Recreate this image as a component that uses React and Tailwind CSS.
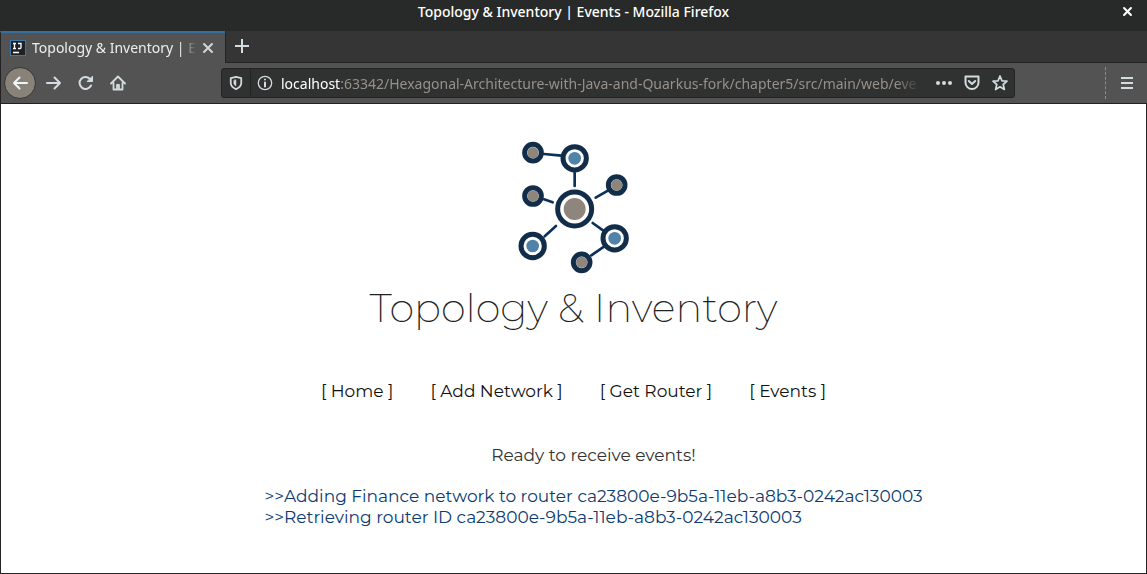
import React from "react";

const stroke = { fill: "none", stroke: "currentColor", strokeWidth: 2, strokeLinecap: "round", strokeLinejoin: "round" };

function Icon({ children, className = "size-4" }) {
  return (
    <svg viewBox="0 0 16 16" className={className} aria-hidden="true" {...stroke}>
      {children}
    </svg>
  );
}

function TitleBar() {
  return (
    <header className="grid h-[31px] grid-cols-[1fr_auto_1fr] items-start bg-[#272a29] pt-px text-white">
      <span />
      <h1 className="text-sm leading-[22px] font-medium">Topology &amp; Inventory | Events - Mozilla Firefox</h1>
      <button type="button" aria-label="Close window" className="mt-[3px] mr-3 justify-self-end p-0.5">
        <Icon className="size-[11px]">
          <path d="M3 3l10 10M13 3L3 13" strokeWidth="3" />
        </Icon>
      </button>
    </header>
  );
}

function TabStrip() {
  return (
    <div className="flex h-8 bg-[#353535]">
      <div className="flex w-[225px] items-center border-t-2 border-l border-t-[#376f9f] border-l-[#242424] bg-[#535353] pr-2 pl-[9px] text-[#eeeeec]">
        <svg viewBox="0 0 16 16" className="size-4 shrink-0" aria-hidden="true">
          <rect x="0.5" y="0.5" width="15" height="15" fill="#1c2225" stroke="#3c79aa" />
          <path d="M3 3.5h3M4.5 3.5v5M3 8.5h3M8 3.5h3v4q0 1-1 1h-2M3 12.5h6" fill="none" stroke="#fff" strokeWidth="1.3" />
        </svg>
        <span className="ml-1.5 w-[164px] overflow-hidden [mask-image:linear-gradient(to_right,black_90%,transparent_100%)] text-sm leading-5 whitespace-nowrap">
          Topology &amp; Inventory | Events
        </span>
        <button type="button" aria-label="Close tab" className="ml-1 text-[#d3d7d8]">
          <Icon>
            <path d="M4 4l8 8M12 4l-8 8" />
          </Icon>
        </button>
      </div>
      <div className="flex flex-1 items-center border-b border-l border-[#242424] pl-2 text-[#d3dcdf]">
        <button type="button" aria-label="New tab" className="-mt-0.5">
          <Icon>
            <path d="M8 1v14M1 8h14" strokeLinecap="butt" />
          </Icon>
        </button>
      </div>
    </div>
  );
}

function NavBar() {
  return (
    <div className="flex h-[41px] items-center border-b border-l border-[#242021] bg-[#535353] pr-2 pl-[3px] text-[#d3dcdf]">
      <div className="flex w-[217px] items-center gap-4">
        <button type="button" aria-label="Back" className="-mr-1.5 flex size-8 items-center justify-center rounded-full border border-[#353535] bg-[#898279] text-[#eef6fa]">
          <Icon>
            <path d="M15 8H2M7.500 2.500L2 8l5.500 5.500" />
          </Icon>
        </button>
        <button type="button" aria-label="Forward">
          <Icon>
            <path d="M1 8h13M8.500 2.500L14 8l-5.500 5.500" />
          </Icon>
        </button>
        <button type="button" aria-label="Reload">
          <Icon>
            <path d="M13 10.500A6 6 0 1 1 12.500 4.500" />
            <path d="M14.500 1.500v5h-5z" fill="currentColor" strokeWidth="1" />
          </Icon>
        </button>
        <button type="button" aria-label="Home">
          <Icon>
            <path d="M1 8.500L8 1.500l7 7M3.500 8v6.500h9V8M7 14v-4h2v4" strokeWidth="1.8" />
          </Icon>
        </button>
      </div>
      <div className="flex h-[30px] w-[794px] items-center rounded-[3px] border border-[#242424] bg-[#303131] pr-1.5">
        <button type="button" aria-label="Tracking protection" className="flex h-full w-[29px] items-center justify-center border-r border-[#242424]">
          <Icon className="size-[14px]">
            <path d="M8 1L14 2.500V8c0 3-2.500 5.500-6 7-3.500-1.500-6-4-6-7V2.500z" />
            <path d="M8 4.500v7Q6 10.500 5.500 8.500V5z" fill="currentColor" strokeWidth="0.5" />
          </Icon>
        </button>
        <button type="button" aria-label="Site information" className="ml-1.5">
          <Icon>
            <circle cx="8" cy="8" r="6.700" strokeWidth="1.300" />
            <path d="M8 7.500v4M8 4.500v.1" />
          </Icon>
        </button>
        <div className="ml-2 min-w-0 flex-1 overflow-hidden [mask-image:linear-gradient(to_right,black_95%,transparent_99%)] pt-px text-sm leading-5 whitespace-nowrap text-[#96918a]">
          <span className="text-white">localhost</span>
          :63342/Hexagonal-Architecture-with-Java-and-Quarkus-fork/chapter5/src/main/web/eve
        </div>
        <div className="ml-2 flex items-center gap-3">
          <button type="button" aria-label="Page actions">
            <Icon>
              <g fill="currentColor" stroke="none">
                <circle cx="2" cy="8" r="2" />
                <circle cx="8" cy="8" r="2" />
                <circle cx="14" cy="8" r="2" />
              </g>
            </Icon>
          </button>
          <button type="button" aria-label="Save to Pocket">
            <Icon>
              <path d="M1.500 1.500h13v6a6.500 6.500 0 0 1-13 0zM4.800 6L8 9l3.200-3" />
            </Icon>
          </button>
          <button type="button" aria-label="Bookmark this page">
            <Icon>
              <path d="M8 1l2 4.800 5 .4-3.800 3.300 1.200 5L8 11.800l-4.400 2.700 1.200-5L1 6.200l5-.4z" strokeWidth="1.700" />
            </Icon>
          </button>
        </div>
      </div>
      <div className="ml-auto flex h-8 items-center border-l border-dashed border-[#8f8f8f] pr-1 pl-[13px]">
        <button type="button" aria-label="Open menu">
          <Icon>
            <path d="M2 3h12M2 8h12M2 13h12" strokeLinecap="butt" />
          </Icon>
        </button>
      </div>
    </div>
  );
}

const links = [
  [132, 72, 184, 77],
  [224, 128, 224, 168],
  [132, 208, 158, 217],
  [134, 319, 168, 288],
  [287, 203, 325, 181],
  [278, 279, 310, 302],
  [274, 376, 312, 350],
];
const nodes = [
  { x: 99, y: 68, r: 25, w: 15, core: 17, fill: "#8e857c" },
  { x: 224, y: 85, r: 35, w: 15, core: 19, fill: "#5082aa" },
  { x: 99, y: 198, r: 25, w: 15, core: 17, fill: "#8e857c" },
  { x: 350, y: 165, r: 25, w: 15, core: 17, fill: "#8e857c" },
  { x: 224, y: 237, r: 51, w: 15, core: 33, fill: "#8e857c" },
  { x: 98, y: 348, r: 35, w: 15, core: 19, fill: "#5082aa" },
  { x: 344, y: 325, r: 35, w: 15, core: 19, fill: "#5082aa" },
  { x: 245, y: 397, r: 25, w: 15, core: 17, fill: "#8e857c" },
];

function Logo() {
  return (
    <svg viewBox="0 0 450 450" className="size-[150px]" role="img" aria-label="Network topology">
      {links.map(([x1, y1, x2, y2]) => (
        <line key={`${x1}-${y1}`} x1={x1} y1={y1} x2={x2} y2={y2} stroke="#0b3158" strokeWidth="8" strokeLinecap="round" />
      ))}
      {nodes.map((n) => (
        <g key={`${n.x}-${n.y}`}>
          <circle cx={n.x} cy={n.y} r={n.r} fill="#fff" stroke="#122d49" strokeWidth={n.w} />
          <circle cx={n.x} cy={n.y} r={n.core} fill={n.fill} />
        </g>
      ))}
    </svg>
  );
}

const menu = ["Home", "Add Network", "Get Router", "Events"];
const events = [
  "Adding Finance network to router ca23800e-9b5a-11eb-a8b3-0242ac130003",
  "Retrieving router ID ca23800e-9b5a-11eb-a8b3-0242ac130003",
];

function Page() {
  return (
    <main className="flex flex-1 flex-col items-center border-x border-b border-[#242424] bg-white pt-[26px] font-['Montserrat','Inter',sans-serif] text-[#222]">
      <div className="pl-[3px]">
        <Logo />
      </div>
      <h2 className="text-[40px] leading-[56px] font-extralight">Topology &amp; Inventory</h2>
      <nav className="mt-[43px] flex gap-[37px] text-[17px] leading-6 text-[#111]">
        {menu.map((item) => (
          <a key={item} href="#">{`[ ${item} ]`}</a>
        ))}
      </nav>
      <div className="mt-10 pl-10">
        <p className="text-center text-[17px] leading-6 text-[#333]">Ready to receive events!</p>
        <ul className="mt-[19px] pb-11 text-[17px] leading-[21px] text-[#0b3b70]">
          {events.map((event) => (
            <li key={event}>{`>>${event}`}</li>
          ))}
        </ul>
      </div>
    </main>
  );
}

export default function App() {
  return (
    <div className="flex min-h-screen flex-col font-['Noto_Sans',sans-serif]">
      <TitleBar />
      <TabStrip />
      <NavBar />
      <Page />
    </div>
  );
}
